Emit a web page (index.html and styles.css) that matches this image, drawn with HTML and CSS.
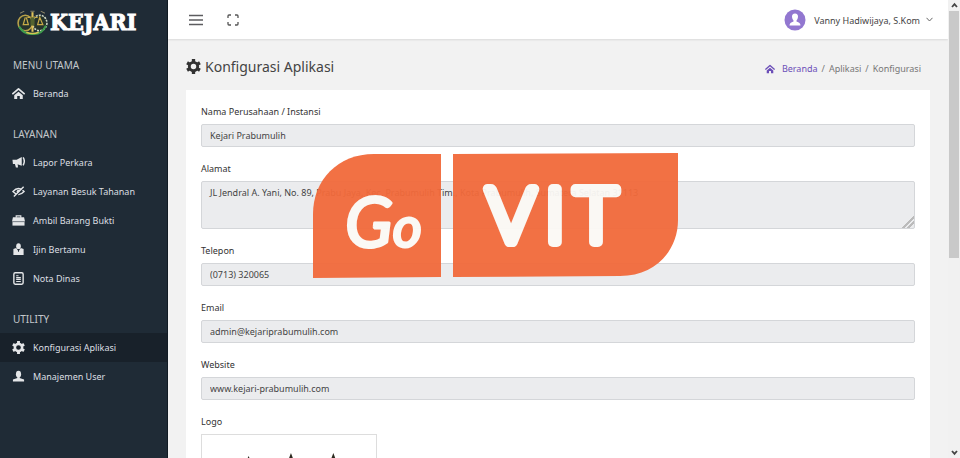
FILE: index.html
```html
<!DOCTYPE html>
<html lang="id">
<head>
    <meta charset="UTF-8">
    <meta name="viewport" content="width=device-width, initial-scale=1.0">
    <title>Konfigurasi Aplikasi</title>
    <link rel="stylesheet" href="styles.css">
</head>
<body>
    <!-- icons used more than once -->
    <svg class="sprite" aria-hidden="true">
        <symbol id="i-home" viewBox="0 0 14 14">
            <path d="M1 7.2 L7 2 L13 7.2" fill="none" stroke="currentColor" stroke-width="1.9" stroke-linecap="round" stroke-linejoin="round"/>
            <path d="M7 5.2 L11.6 9 V13 H8.4 V9.8 H5.6 V13 H2.4 V9 Z" fill="currentColor"/>
        </symbol>
        <symbol id="i-gear" viewBox="0 0 14 14">
            <circle cx="7" cy="7" r="3.9" fill="none" stroke="currentColor" stroke-width="2.7"/>
            <path d="M7 0 V3 M7 11 V14 M1 3.5 L3.5 5 M10.5 9 L13 10.5 M1 10.5 L3.5 9 M10.5 5 L13 3.5" stroke="currentColor" stroke-width="3.1"/>
        </symbol>
    </svg>

    <div class="page">
        <aside class="sidebar">
            <a class="brand" href="#">
                <svg class="seal" viewBox="0 0 32 26">
                    <path d="M4 4 L8 2 M14 2 H18 M24 2 L28 4" stroke="#8b8468" stroke-width="1"/>
                    <ellipse cx="9" cy="13.5" rx="7" ry="7.5" fill="#26332c" stroke="#b9a24a" stroke-width="1.5"/>
                    <ellipse cx="23" cy="13.5" rx="7" ry="7.5" fill="#26332c" stroke="#cfd8c4" stroke-width="1.5" stroke-dasharray="2 1"/>
                    <path d="M3 17 Q8 25 16 24 Q25 25 29 16" fill="none" stroke="#3f9a4b" stroke-width="2"/>
                    <path d="M10 22.5 Q16 25 22 22.5" fill="none" stroke="#d4c552" stroke-width="1.5"/>
                    <path d="M16 3 V22" stroke="#e0c35a" stroke-width="2"/>
                    <path d="M11 8 H21 M9 8 L7 15 H12 L10 8 M23 8 L21 15 H26 Z" fill="none" stroke="#c8ab48" stroke-width="1.2"/>
                    <path d="M14 8 H18 V16 H14 Z" fill="#54632f"/>
                </svg>
                <span class="brand-name">KEJARI</span>
            </a>

            <nav class="menu">
                <h2 class="menu-title">MENU UTAMA</h2>
                <a class="menu-item" href="#">
                    <svg class="icon"><use href="#i-home"/></svg>
                    Beranda
                </a>

                <h2 class="menu-title">LAYANAN</h2>
                <a class="menu-item" href="#">
                    <svg class="icon" viewBox="0 0 14 14">
                        <path d="M0.5 4 H5 L10.5 1 V10.5 L5 8.5 H1 Z" fill="currentColor"/>
                        <path d="M3 8 H6 L6.5 12.5 H4.2 Z" fill="currentColor"/>
                        <path d="M12 1.5 Q14.5 5.5 12 10" fill="none" stroke="currentColor" stroke-width="1.6"/>
                    </svg>
                    Lapor Perkara
                </a>
                <a class="menu-item" href="#">
                    <svg class="icon" viewBox="0 0 14 14">
                        <path d="M1 7 Q7 0.5 13 7 Q7 13.5 1 7 Z" fill="none" stroke="currentColor" stroke-width="1.5"/>
                        <circle cx="7" cy="7" r="2" fill="currentColor"/>
                        <path d="M3 13 L13 3" stroke="#1f2b36" stroke-width="1.5"/>
                        <path d="M2 12.5 L12.5 2" stroke="currentColor" stroke-width="1.5"/>
                    </svg>
                    Layanan Besuk Tahanan
                </a>
                <a class="menu-item" href="#">
                    <svg class="icon" viewBox="0 0 14 14">
                        <path d="M4.5 4 V2 H9.5 V4" fill="none" stroke="currentColor" stroke-width="1.2"/>
                        <path d="M1 3.5 H13 L14 8 H0 Z" fill="currentColor"/>
                        <path d="M0.5 8.7 H13.5 V12.5 H0.5 Z" fill="currentColor"/>
                    </svg>
                    Ambil Barang Bukti
                </a>
                <a class="menu-item" href="#">
                    <svg class="icon" viewBox="0 0 14 14">
                        <ellipse cx="7" cy="3.5" rx="2.5" ry="3.3" fill="currentColor"/>
                        <path d="M1.5 6.5 L4.5 5.5 L7 9 L9.5 5.5 L12.5 6.5 V13 H1.5 Z" fill="currentColor"/>
                        <path d="M6.3 6.5 H7.7 L7.5 9.5 H6.5 Z" fill="#1f2b36"/>
                    </svg>
                    Ijin Bertamu
                </a>
                <a class="menu-item" href="#">
                    <svg class="icon" viewBox="0 0 14 14">
                        <rect x="2" y="0.8" width="10" height="12.4" rx="1.5" fill="none" stroke="currentColor" stroke-width="1.5"/>
                        <path d="M4.5 4 H7 M4.5 6 H9.5 M4.5 8 H9.5 M4.5 10.2 H9.5" stroke="currentColor" stroke-width="1.2"/>
                    </svg>
                    Nota Dinas
                </a>

                <h2 class="menu-title">UTILITY</h2>
                <a class="menu-item active" href="#">
                    <svg class="icon"><use href="#i-gear"/></svg>
                    Konfigurasi Aplikasi
                </a>
                <a class="menu-item" href="#">
                    <svg class="icon" viewBox="0 0 14 14">
                        <ellipse cx="7" cy="4.5" rx="2.8" ry="3.7" fill="currentColor"/>
                        <path d="M5.8 7 H8.2 V8.5 L13 10.2 V12.5 H1 V10.2 L5.8 8.5 Z" fill="currentColor"/>
                    </svg>
                    Manajemen User
                </a>
            </nav>
        </aside>

        <div class="main">
            <header class="topbar">
                <button class="tool" type="button" aria-label="Menu">
                    <svg width="16" height="12" viewBox="0 0 16 12"><path d="M1 1.5 H15 M1 6 H15 M1 10.5 H15" stroke="#5c5c5f" stroke-width="1.5"/></svg>
                </button>
                <button class="tool" type="button" aria-label="Layar penuh">
                    <svg width="14" height="12" viewBox="0 0 14 12"><path d="M2 4 V2 Q2 1 3 1 H5 M9 1 H11 Q12 1 12 2 V4 M12 8 V10 Q12 11 11 11 H9 M5 11 H3 Q2 11 2 10 V8" fill="none" stroke="#555" stroke-width="1.3"/></svg>
                </button>
                <button class="user" type="button">
                    <svg class="avatar" viewBox="0 0 22 22">
                        <circle cx="11" cy="11" r="10.5" fill="#9277d0"/>
                        <path d="M11 4.5 Q14.2 4.5 14 8 Q13.7 10.5 12.5 11.5 V12.5 Q16.5 13.5 16.5 16.5 H5.5 Q5.5 13.5 9.5 12.5 V11.5 Q8.3 10.5 8 8 Q7.8 4.5 11 4.5 Z" fill="#fff"/>
                    </svg>
                    <span class="user-name">Vanny Hadiwijaya, S.Kom</span>
                    <svg width="7" height="5" viewBox="0 0 7 5"><path d="M0.5 0.8 L3.5 4 L6.5 0.8" fill="none" stroke="#666"/></svg>
                </button>
            </header>

            <main class="content">
                <div class="heading">
                    <h1 class="page-title">
                        <svg class="icon-lg"><use href="#i-gear"/></svg>
                        Konfigurasi Aplikasi
                    </h1>
                    <nav class="breadcrumb">
                        <a href="#"><svg class="icon-sm"><use href="#i-home"/></svg>Beranda</a>
                        <span>/</span>
                        <span>Aplikasi</span>
                        <span>/</span>
                        <span>Konfigurasi</span>
                    </nav>
                </div>

                <form class="card">
                    <div class="field">
                        <label for="nama">Nama Perusahaan / Instansi</label>
                        <input type="text" id="nama" value="Kejari Prabumulih" readonly>
                    </div>
                    <div class="field">
                        <label for="alamat">Alamat</label>
                        <textarea id="alamat" readonly>JL Jendral A. Yani, No. 89, Prabu Jaya, Kec. Prabumulih Tim., Kota Prabumulih, Sumatera Selatan 31113</textarea>
                    </div>
                    <div class="field">
                        <label for="telepon">Telepon</label>
                        <input type="text" id="telepon" value="(0713) 320065" readonly>
                    </div>
                    <div class="field">
                        <label for="email">Email</label>
                        <input type="text" id="email" value="admin@kejariprabumulih.com" readonly>
                    </div>
                    <div class="field">
                        <label for="website">Website</label>
                        <input type="text" id="website" value="www.kejari-prabumulih.com" readonly>
                    </div>
                    <div class="field">
                        <span class="label">Logo</span>
                        <div class="logo-box">
                            <svg viewBox="0 0 140 120">
                                <path d="M29 3 L32 10 L30 20 H28 L26 10 Z M72 0 L75 8 L73 20 H71 L69 8 Z M115 0 L118 8 L116 20 H114 L112 8 Z" fill="#2d2a20"/>
                                <circle cx="72" cy="65" r="45" fill="none" stroke="#b9a24a" stroke-width="4"/>
                            </svg>
                        </div>
                    </div>
                </form>
            </main>
        </div>

        <!-- scrollbar -->
        <div class="scrollbar">
            <svg width="11" height="11" viewBox="0 0 11 11"><path d="M3 7 L5.5 4.2 L8 7" fill="none" stroke="#444" stroke-width="1.8"/></svg>
            <div class="scroll-thumb"></div>
            <svg width="11" height="11" viewBox="0 0 11 11"><path d="M3 4 L5.5 6.8 L8 4" fill="none" stroke="#444" stroke-width="1.8"/></svg>
        </div>
    </div>

    <!-- watermark -->
    <svg class="watermark" width="368" height="128" viewBox="0 0 368 128">
        <path d="M1 126 V62 C1 28 26 2 62 2 H129 V125 Z" fill="#f26a3b"/>
        <path d="M141 2 L366 1 V68 C366 98 344 124 308 124 L141 125 Z" fill="#f26a3b"/>
        <text class="wm-go" x="33" y="95">G<tspan class="wm-o">o</tspan></text>
        <g class="wm-vit">
            <text x="199" y="90">V</text>
            <text x="243" y="90">I</text>
            <text x="284" y="90">T</text>
        </g>
    </svg>
</body>
</html>
```
FILE: styles.css
```css
* {
    box-sizing: border-box;
}

body {
    margin: 0;
    font-family: "Noto Sans", "Open Sans", sans-serif;
    font-size: 9px;
    color: #333;
    background-color: #f2f2f2;
}

a {
    text-decoration: none;
}

.sprite {
    display: none;
}

.page {
    display: flex;
    height: 100vh;
    overflow: hidden;
}

/* sidebar */
.sidebar {
    flex: 0 0 168px;
    background-color: #1f2b36;
    border-right: 1px solid #111b24;
}

.brand {
    display: flex;
    align-items: center;
    gap: 1px;
    height: 39px;
    padding: 5px 0 0 16px;
}

.seal {
    width: 33px;
    height: 27px;
}

.brand-name {
    font-family: "DejaVu Serif Condensed", "DejaVu Serif", serif;
    font-size: 23px;
    font-weight: bold;
    line-height: 26px;
    color: #fff;
    -webkit-text-stroke: 1px #fff;
}

.menu-title {
    margin: 0;
    padding: 18px 13px 6px;
    font-size: 10px;
    font-weight: normal;
    line-height: 16px;
    color: #c3c8cc;
}

.menu-item {
    display: flex;
    align-items: center;
    gap: 8px;
    height: 29px;
    padding: 0 12px;
    color: #dcdfe2;
}

.menu-item.active {
    background-color: #18212a;
}

.icon {
    width: 13px;
    height: 13px;
    color: #e4e6e8;
}

/* top bar */
.main {
    flex: 1;
    min-width: 0;
}

.topbar {
    display: flex;
    align-items: center;
    gap: 22px;
    height: 39px;
    padding: 0 15px 0 20px;
    background-color: #fff;
    box-shadow: 0 1px 2px rgba(0, 0, 0, 0.1);
}

.tool,
.user {
    display: flex;
    align-items: center;
    padding: 0;
    border: none;
    background: none;
    font: inherit;
    color: #444;
    cursor: pointer;
}

.user {
    gap: 6px;
    margin-left: auto;
}

.user-name {
    padding-top: 2px;
}

.avatar {
    width: 22px;
    height: 22px;
    margin-right: 2px;
}

/* content */
.content {
    padding: 0 18px;
}

.heading {
    display: flex;
    align-items: center;
    justify-content: space-between;
    height: 51px;
    padding: 4px 9px 0 0;
}

.page-title {
    display: flex;
    align-items: center;
    gap: 4px;
    margin: 0;
    font-size: 14px;
    font-weight: normal;
    color: #444;
}

.icon-lg {
    width: 15px;
    height: 15px;
    color: #333;
}

.breadcrumb {
    display: flex;
    align-items: center;
    gap: 4px;
    padding-top: 4px;
    color: #777;
}

.breadcrumb a {
    display: flex;
    align-items: center;
    gap: 7px;
    color: #6c4fb8;
}

.icon-sm {
    width: 10px;
    height: 10px;
}

.card {
    padding: 13px 15px;
    background-color: #fff;
}

.field {
    margin-bottom: 13px;
}

.field label,
.label {
    display: block;
    margin-bottom: 3px;
    line-height: 18px;
}

.field input,
.field textarea {
    display: block;
    width: 100%;
    height: 23px;
    padding: 0 8px;
    border: 1px solid #d4d6d9;
    border-radius: 2px;
    outline: none;
    background-color: #ebecee;
    font: inherit;
    color: #444;
}

.field textarea {
    height: 48px;
    padding: 4px 8px;
    resize: vertical;
}

.field textarea::-webkit-resizer {
    background: linear-gradient(135deg, transparent 60%, #bbb 60%, #bbb 68%, transparent 68%, transparent 76%, #bbb 76%, #bbb 84%, transparent 84%);
}

.logo-box {
    width: 176px;
    padding: 18px;
    border: 1px solid #ddd;
}

.logo-box svg {
    display: block;
}

/* scrollbar */
.scrollbar {
    display: flex;
    flex: 0 0 12px;
    flex-direction: column;
    align-items: center;
    background-color: #f1f1f1;
}

.scroll-thumb {
    width: 10px;
    height: 54vh;
    margin-bottom: auto;
    background-color: #c9c9c9;
}

/* watermark */
.watermark {
    position: absolute;
    top: 152px;
    left: 312px;
    opacity: 0.95;
    pointer-events: none;
}

.wm-go,
.wm-vit {
    font-family: Lato, sans-serif;
    fill: #fbf9f5;
    stroke: #fbf9f5;
    stroke-linecap: round;
    stroke-linejoin: round;
}

.wm-go {
    font-size: 70px;
    font-style: italic;
    stroke-width: 3px;
}

.wm-o {
    font-size: 56px;
}

.wm-vit {
    font-size: 74px;
    font-weight: 300;
    stroke-width: 10px;
    text-anchor: middle;
}
```
